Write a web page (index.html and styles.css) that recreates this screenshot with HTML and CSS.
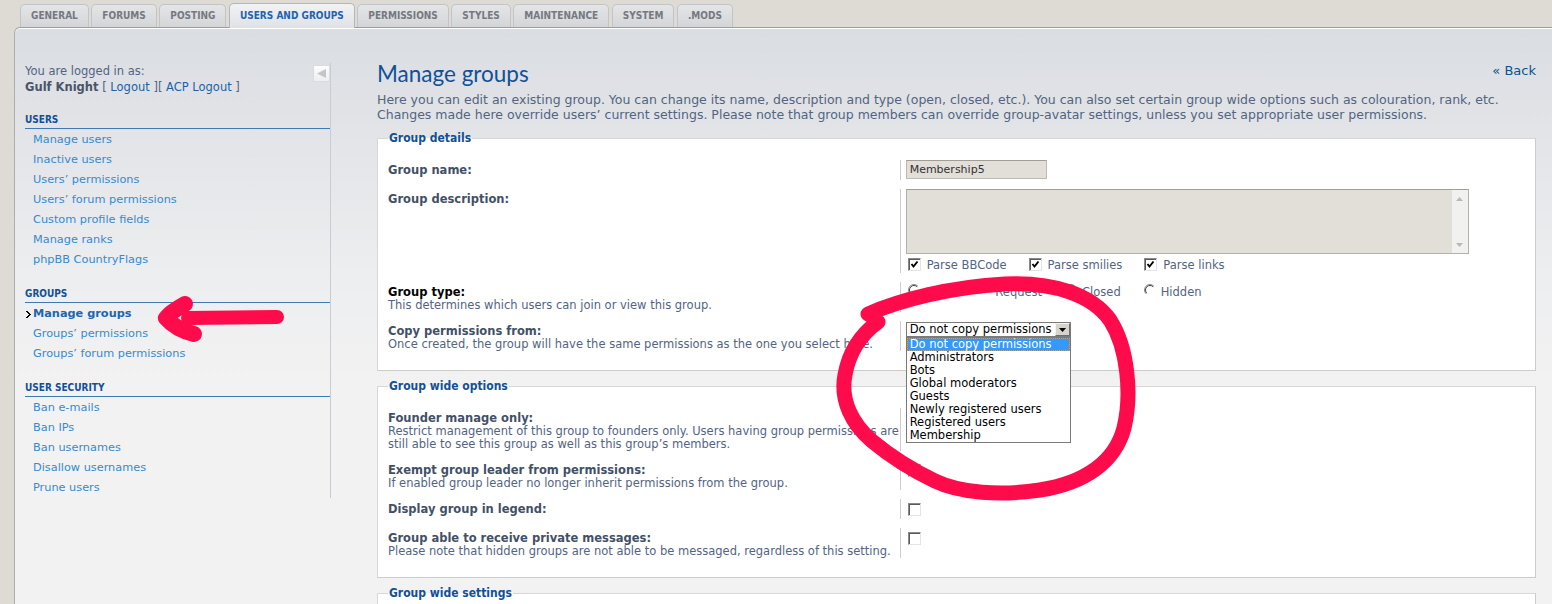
FILE: index.html
```html
<!DOCTYPE html>
<html lang="en">
<head>
<meta charset="utf-8">
<title>Manage groups</title>
<link rel="stylesheet" href="styles.css">
</head>
<body>
<div class="page">
  <ul class="tabs">
    <li class="tab">GENERAL</li>
    <li class="tab">FORUMS</li>
    <li class="tab">POSTING</li>
    <li class="tab active">USERS AND GROUPS</li>
    <li class="tab">PERMISSIONS</li>
    <li class="tab">STYLES</li>
    <li class="tab">MAINTENANCE</li>
    <li class="tab">SYSTEM</li>
    <li class="tab">.MODS</li>
  </ul>

  <div class="panel">
    <aside class="sidebar">
      <div class="login">
        <div class="login-text">
          You are logged in as:<br>
          <strong>Gulf Knight</strong> [ <a href="#">Logout</a> ][ <a href="#">ACP Logout</a> ]
        </div>
        <span class="collapse"><svg width="11" height="9" viewBox="0 0 11 9"><polygon points="10,0 10,9 1,4.5" fill="#c3c5c8"/></svg></span>
      </div>

      <div class="menu-head">USERS</div>
      <ul class="menu">
        <li><a href="#">Manage users</a></li>
        <li><a href="#">Inactive users</a></li>
        <li><a href="#">Users’ permissions</a></li>
        <li><a href="#">Users’ forum permissions</a></li>
        <li><a href="#">Custom profile fields</a></li>
        <li><a href="#">Manage ranks</a></li>
        <li><a href="#">phpBB CountryFlags</a></li>
      </ul>

      <div class="menu-head">GROUPS</div>
      <ul class="menu">
        <li class="active"><svg class="bullet" width="5" height="7" viewBox="0 0 5 7"><path d="M0 0h2v1h1v1h1v1h1v1h-1v1h-1v1h-1v1h-2v-1h1v-1h1v-1h1v-1h-1v-1h-1v-1h-1z" fill="#000"/></svg><a href="#">Manage groups</a></li>
        <li><a href="#">Groups’ permissions</a></li>
        <li><a href="#">Groups’ forum permissions</a></li>
      </ul>

      <div class="menu-head">USER SECURITY</div>
      <ul class="menu">
        <li><a href="#">Ban e-mails</a></li>
        <li><a href="#">Ban IPs</a></li>
        <li><a href="#">Ban usernames</a></li>
        <li><a href="#">Disallow usernames</a></li>
        <li><a href="#">Prune users</a></li>
      </ul>
    </aside>

    <main class="main">
      <div class="title-row">
        <h1>Manage groups</h1>
        <a class="back" href="#">« Back</a>
      </div>
      <p class="intro">Here you can edit an existing group. You can change its name, description and type (open, closed, etc.). You can also set certain group wide options such as colouration, rank, etc. Changes made here override users’ current settings. Please note that group members can override group-avatar settings, unless you set appropriate user permissions.</p>

      <fieldset class="first">
        <legend>Group details</legend>
        <dl class="row">
          <dt><span class="lbl">Group name:</span></dt>
          <dd><div class="inputbox">Membership5</div></dd>
        </dl>
        <dl class="row">
          <dt><span class="lbl">Group description:</span></dt>
          <dd>
            <div class="textarea">
              <div class="scroll">
                <svg width="7" height="4" viewBox="0 0 7 4"><polygon points="0,4 7,4 3.5,0" fill="#b9b9b9"/></svg>
                <svg width="7" height="4" viewBox="0 0 7 4"><polygon points="0,0 7,0 3.5,4" fill="#b9b9b9"/></svg>
              </div>
            </div>
            <div class="checks">
              <span class="opt"><span class="cb"><svg width="11" height="11" viewBox="0 0 11 11"><polyline points="2.5,5 4.5,7.5 8.5,2.5" fill="none" stroke="#000" stroke-width="1.9"/></svg></span>Parse BBCode</span>
              <span class="opt"><span class="cb"><svg width="11" height="11" viewBox="0 0 11 11"><polyline points="2.5,5 4.5,7.5 8.5,2.5" fill="none" stroke="#000" stroke-width="1.9"/></svg></span>Parse smilies</span>
              <span class="opt"><span class="cb"><svg width="11" height="11" viewBox="0 0 11 11"><polyline points="2.5,5 4.5,7.5 8.5,2.5" fill="none" stroke="#000" stroke-width="1.9"/></svg></span>Parse links</span>
            </div>
          </dd>
        </dl>
        <dl class="row">
          <dt><span class="lbl black">Group type:</span><br>This determines which users can join or view this group.</dt>
          <dd>
            <div class="radios">
              <span class="opt"><svg class="radio" width="12" height="12" viewBox="0 0 12 12"><circle cx="6" cy="6" r="5.5" fill="#fff"/><path d="M2.1 9.9A5.5 5.5 0 0 1 9.9 2.1" fill="none" stroke="#8c8c8c" stroke-width="1"/><path d="M2.8 9.2A4.5 4.5 0 0 1 9.2 2.8" fill="none" stroke="#404040" stroke-width="1"/></svg>Open</span>
              <span class="opt"><svg class="radio" width="12" height="12" viewBox="0 0 12 12"><circle cx="6" cy="6" r="5.5" fill="#fff"/><path d="M2.1 9.9A5.5 5.5 0 0 1 9.9 2.1" fill="none" stroke="#8c8c8c" stroke-width="1"/><path d="M2.8 9.2A4.5 4.5 0 0 1 9.2 2.8" fill="none" stroke="#404040" stroke-width="1"/></svg>Request</span>
              <span class="opt"><svg class="radio" width="12" height="12" viewBox="0 0 12 12"><circle cx="6" cy="6" r="5.5" fill="#fff"/><path d="M2.1 9.9A5.5 5.5 0 0 1 9.9 2.1" fill="none" stroke="#8c8c8c" stroke-width="1"/><path d="M2.8 9.2A4.5 4.5 0 0 1 9.2 2.8" fill="none" stroke="#404040" stroke-width="1"/></svg>Closed</span>
              <span class="opt"><svg class="radio" width="12" height="12" viewBox="0 0 12 12"><circle cx="6" cy="6" r="5.5" fill="#fff"/><path d="M2.1 9.9A5.5 5.5 0 0 1 9.9 2.1" fill="none" stroke="#8c8c8c" stroke-width="1"/><path d="M2.8 9.2A4.5 4.5 0 0 1 9.2 2.8" fill="none" stroke="#404040" stroke-width="1"/></svg>Hidden</span>
            </div>
          </dd>
        </dl>
        <dl class="row">
          <dt><span class="lbl">Copy permissions from:</span><br>Once created, the group will have the same permissions as the one you select here.</dt>
          <dd class="sel-dd">
            <div class="select">
              <span class="sel-text">Do not copy permissions</span>
              <span class="sel-btn"><svg width="7" height="4" viewBox="0 0 7 4"><polygon points="0,0 7,0 3.5,4" fill="#000"/></svg></span>
              <ul class="options">
                <li class="selected">Do not copy permissions</li>
                <li>Administrators</li>
                <li>Bots</li>
                <li>Global moderators</li>
                <li>Guests</li>
                <li>Newly registered users</li>
                <li>Registered users</li>
                <li>Membership</li>
              </ul>
            </div>
          </dd>
        </dl>
      </fieldset>

      <fieldset>
        <legend>Group wide options</legend>
        <dl class="row">
          <dt><span class="lbl">Founder manage only:</span><br>Restrict management of this group to founders only. Users having group permissions are still able to see this group as well as this group’s members.</dt>
          <dd class="cb-dd"><span class="cb"></span></dd>
        </dl>
        <dl class="row">
          <dt><span class="lbl">Exempt group leader from permissions:</span><br>If enabled group leader no longer inherit permissions from the group.</dt>
          <dd class="cb-dd"><span class="cb"></span></dd>
        </dl>
        <dl class="row">
          <dt><span class="lbl">Display group in legend:</span></dt>
          <dd class="cb-dd"><span class="cb"></span></dd>
        </dl>
        <dl class="row">
          <dt><span class="lbl">Group able to receive private messages:</span><br>Please note that hidden groups are not able to be messaged, regardless of this setting.</dt>
          <dd class="cb-dd"><span class="cb"></span></dd>
        </dl>
      </fieldset>

      <fieldset class="last">
        <legend>Group wide settings</legend>
      </fieldset>
    </main>
  </div>

  <svg class="marker" width="1552" height="604" viewBox="0 0 1552 604">
    <g fill="none" stroke="#fe0b4b" stroke-linecap="round" stroke-linejoin="round">
      <path d="M277 317 L188 318" stroke-width="14"/>
      <path d="M185 304 C176 309 169 314 166 318 C172 325 182 331 194 334" stroke-width="16"/>
      <path d="M868 314 C900 300 950 287 1005 284 C1055 282 1092 295 1110 320 C1128 348 1132 395 1124 428 C1115 462 1085 483 1040 490 C1000 496 960 493 935 481 C910 469 890 456 872 441 C852 424 840 400 845 375 C849 352 860 335 878 322" stroke-width="15"/>
    </g>
  </svg>
</div>
</body>
</html>
```

FILE: styles.css
```css
* { box-sizing: border-box; }

html, body {
  margin: 0;
  padding: 0;
}

body {
  background: #dedbd5;
  font-family: "DejaVu Sans", Verdana, sans-serif;
  font-size: 11.5px;
  color: #536482;
  overflow: hidden;
}

a { text-decoration: none; }

.page {
  position: relative;
  width: 1552px;
  height: 604px;
  overflow: hidden;
}

/* ---------- tabs ---------- */
.tabs {
  list-style: none;
  margin: 0;
  padding: 0 0 0 20px;
  height: 27px;
  display: flex;
  align-items: flex-end;
  gap: 2.5px;
  position: relative;
  z-index: 2;
}

.tab {
  height: 23px;
  padding: 0 10px;
  border: 1px solid #c3c4c7;
  border-bottom: none;
  border-radius: 5px 5px 0 0;
  background: linear-gradient(#e4e5e7, #d3d5d8);
  font-family: "DejaVu Sans Condensed", "DejaVu Sans", sans-serif;
  font-weight: bold;
  font-size: 10px;
  line-height: 22px;
  color: #75797f;
}

.tab.active {
  height: 25px;
  margin-bottom: -1px;
  background: linear-gradient(#f1f2f4, #dfe2e6);
  border-color: #b4b6b9;
  color: #1f63b1;
  line-height: 24px;
}

/* ---------- panel ---------- */
.panel {
  margin-left: 14px;
  height: 580px;
  border-top: 1px solid #9c9c9c;
  border-left: 1px solid #adadad;
  border-top-left-radius: 6px;
  background: linear-gradient(#dadde2 0, #e3e5e8 120px, #edeef0 250px, #f2f2f2 360px, #f2f2f2 100%);
  box-shadow: inset 0 1px 0 #fff;
  display: flex;
  align-items: flex-start;
}

/* ---------- sidebar ---------- */
.sidebar {
  flex: none;
  width: 306px;
  margin: 35px 0 0 10px;
  border-right: 1px solid #c9ccd0;
}

.login {
  display: flex;
  justify-content: space-between;
  align-items: flex-start;
  line-height: 16px;
}

.login-text strong { color: #4a5567; }
.login-text a { color: #1f5fa3; }

.collapse {
  width: 17px;
  height: 17px;
  margin-top: 2px;
  border: 1px solid #d9dbde;
  background: linear-gradient(#fdfdfd, #eceef0);
  display: flex;
  align-items: center;
  justify-content: center;
}

.menu-head {
  margin-top: 18px;
  font-family: "DejaVu Sans Condensed", "DejaVu Sans", sans-serif;
  font-weight: bold;
  font-size: 10px;
  line-height: 14px;
  color: #115098;
  padding-bottom: 1px;
  border-bottom: 1px solid #4079b1;
}

.menu + .menu-head { margin-top: 17px; }

.menu {
  list-style: none;
  margin: 1px 0 0;
  padding: 0;
}

.menu li {
  font-size: 11.3px;
  line-height: 20px;
  padding-left: 8px;
}

.menu a { color: #368ad2; }

.menu li.active {
  padding-left: 1px;
  display: flex;
  align-items: center;
}

.menu li.active .bullet { margin-right: 2px; }

.menu li.active a {
  font-weight: bold;
  color: #1e66b0;
}

/* ---------- main ---------- */
.main {
  flex: 1;
  min-width: 0;
  margin: 0 16px 0 46px;
  padding-top: 33px;
}

.title-row {
  display: flex;
  justify-content: space-between;
  align-items: flex-start;
}

h1 {
  margin: 0;
  font-family: Lato, "Open Sans", sans-serif;
  font-weight: normal;
  font-size: 22.5px;
  line-height: 26px;
  color: #115098;
}

.back {
  margin-top: 2px;
  font-size: 13px;
  color: #105289;
}

.intro {
  margin: 5px 0 0;
  font-size: 12.5px;
  line-height: 15px;
}

fieldset {
  margin: 0 0 7px;
  padding: 14px 10px 10px;
  min-width: 0;
  border: 1px solid;
  border-color: #d7d7d7 #cccccc #cccccc #d7d7d7;
  background: #fff;
}

fieldset.first { margin-top: 8px; }

fieldset.last { min-height: 60px; }

legend {
  padding: 0 1px;
  font-family: "DejaVu Sans Condensed", "DejaVu Sans", sans-serif;
  font-weight: bold;
  font-size: 12px;
  line-height: 16px;
  color: #115098;
}

.row {
  display: flex;
  margin: 0 0 9px;
}

.row dt {
  flex: none;
  width: 45%;
  padding-top: 4px;
  line-height: 13px;
}

.lbl {
  font-weight: bold;
  color: #425067;
}

.lbl.black { color: #000; }

.row dd {
  flex: 1;
  margin: 0;
  padding-left: 5px;
  border-left: 1px solid #cccccc;
}

.inputbox {
  width: 141px;
  height: 19px;
  margin-bottom: 1px;
  padding-left: 3px;
  border: 1px solid #bdbab4;
  border-top-color: #a09d97;
  background: #e2ded8;
  font-size: 11px;
  line-height: 17px;
  color: #333;
}

.textarea {
  width: 563px;
  height: 65px;
  border: 1px solid #b4b1ab;
  border-top-color: #a19e98;
  background: #e2ded8;
  display: flex;
  justify-content: flex-end;
}

.scroll {
  width: 16px;
  background: #f1f1ef;
  display: flex;
  flex-direction: column;
  justify-content: space-between;
  align-items: center;
  padding: 7px 0 6px;
}

.checks {
  height: 19px;
  display: flex;
  align-items: flex-start;
}

.opt {
  display: inline-flex;
  align-items: flex-start;
  line-height: 13px;
}

.checks .opt {
  padding-top: 5px;
  margin-right: 20px;
}

.checks .cb {
  margin: -1px 6px 0 2px;
}

.cb {
  display: inline-flex;
  align-items: center;
  justify-content: center;
  width: 13px;
  height: 13px;
  flex: none;
  border: 1px solid;
  border-color: #8a8a8a #e4e4e4 #e4e4e4 #8a8a8a;
  box-shadow: inset 1px 1px 0 #5a5a5a;
  background: #fff;
}

.radios {
  display: flex;
  padding-top: 4px;
}

.radios .opt { margin-right: 21px; }

.radio {
  flex: none;
  margin: -2px 5px 0 2px;
}

.sel-dd { padding-top: 1px; }

.select {
  position: relative;
  width: 165px;
  height: 15px;
  border: 1px solid #7b7b7b;
  background: #fff;
  color: #000;
  line-height: 13px;
  padding-left: 3px;
}

.sel-btn {
  position: absolute;
  right: 0;
  top: 0;
  width: 15px;
  height: 13px;
  border: 1px solid;
  border-color: #f4f3f0 #6e6e6e #6e6e6e #f4f3f0;
  background: #d6d3cc;
  display: flex;
  align-items: center;
  justify-content: center;
}

.options {
  position: absolute;
  left: -1px;
  top: 14px;
  z-index: 5;
  width: 165px;
  list-style: none;
  margin: 0;
  padding: 0;
  border: 1px solid #7a7a7a;
  background: #fff;
}

.options li {
  height: 13px;
  line-height: 13px;
  padding-left: 3px;
  color: #000;
}

.options li.selected {
  background: #3399ff;
  color: #fff;
  outline: 1px dotted #e59b3b;
  outline-offset: -1px;
}

.cb-dd { padding-top: 4px; }

.cb-dd .cb { margin-left: 2px; }

/* ---------- marker overlay ---------- */
.marker {
  position: absolute;
  left: 0;
  top: 0;
  z-index: 10;
  pointer-events: none;
}
```
